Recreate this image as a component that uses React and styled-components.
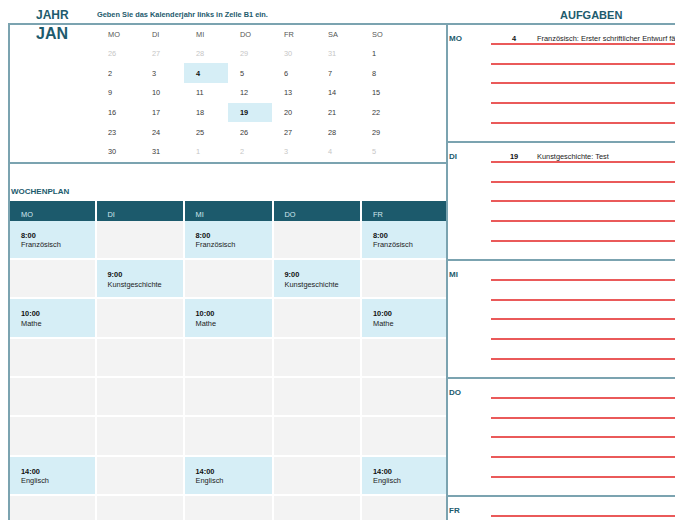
import React from 'react';
import styled, { createGlobalStyle } from 'styled-components';

const TEAL = '#1d5b6d';
const LINE = '#7ba3b0';
const RED = '#ea5a5a';
const LIGHT = '#d6eef6';
const EMPTY = '#f3f3f3';

const Global = createGlobalStyle`
  html, body { margin: 0; padding: 0; background: #ffffff; }
  body { font-family: "Liberation Sans", Arial, sans-serif; }
`;

const Page = styled.div`
  width: 675px;
  height: 520px;
  overflow: hidden;
  display: grid;
  grid-template-columns: 448px 227px;
  grid-template-rows: 23px 497px;
`;

const TitleLeft = styled.div`
  display: flex;
  align-items: flex-end;
  padding-left: 36px;
`;

const Jahr = styled.div`
  width: 61px;
  font-size: 12px;
  font-weight: 700;
  color: ${TEAL};
  padding-bottom: 1.5px;
`;

const Hint = styled.div`
  font-size: 7.4px;
  font-weight: 700;
  color: ${TEAL};
  padding-bottom: 4px;
  white-space: nowrap;
`;

const TitleRight = styled.div`
  display: flex;
  align-items: flex-end;
  padding-left: 112px;
  font-size: 11px;
  font-weight: 700;
  color: ${TEAL};
  padding-bottom: 1.7px;
  box-sizing: border-box;
`;

const Frame = styled.div`
  margin-left: 8px;
  border: 2px solid ${LINE};
  border-bottom: none;
  display: flex;
  flex-direction: column;
  overflow: hidden;
  min-height: 0;
`;

const Calendar = styled.div`
  display: grid;
  grid-template-columns: 86px repeat(7, 44px);
  grid-template-rows: 18.67px repeat(6, 19.67px);
  border-bottom: 2px solid ${LINE};
  flex-shrink: 0;
`;

const MonthCell = styled.div`
  grid-column: 1;
  grid-row: 1 / span 7;
  padding-left: 26px;
`;

const Month = styled.div`
  height: 18.67px;
  display: flex;
  align-items: center;
  font-size: 16px;
  font-weight: 700;
  color: ${TEAL};
`;

const DayHead = styled.div`
  display: flex;
  align-items: center;
  padding-left: 12px;
  font-size: 7.4px;
  color: #555555;
`;

const DateCell = styled.div`
  display: flex;
  align-items: center;
  padding-left: 12px;
  font-size: 7.4px;
  background: ${(p) => (p.$hl ? LIGHT : 'transparent')};
  font-weight: ${(p) => (p.$hl ? 700 : 400)};
  color: ${(p) => (p.$muted ? '#c6c6c6' : p.$hl ? '#111111' : '#3a3a3a')};
`;

const WeekTitle = styled.div`
  height: 37.33px;
  flex-shrink: 0;
  box-sizing: border-box;
  display: flex;
  align-items: flex-end;
  padding: 0 0 5.3px 1px;
  font-size: 8px;
  font-weight: 700;
  color: ${TEAL};
`;

const WeekGrid = styled.div`
  display: grid;
  grid-template-columns: 84.5px 86px 87px 86.5px 1fr;
  column-gap: 2px;
  flex-shrink: 0;
`;

const WeekHeader = styled(WeekGrid)`
  height: 19.67px;
`;

const HeadCell = styled.div`
  background: #1c5a6c;
  color: #d2e8ef;
  font-size: 7.4px;
  display: flex;
  align-items: flex-end;
  padding: 0 0 1.1px 11px;
`;

const WeekBody = styled(WeekGrid)`
  grid-auto-rows: 37.33px;
  row-gap: 2px;
`;

const WeekCell = styled.div`
  background: ${(p) => (p.$filled ? LIGHT : EMPTY)};
  display: flex;
  flex-direction: column;
  justify-content: center;
  padding: 2px 0 0 11px;
  box-sizing: border-box;
  font-size: 7.4px;
  line-height: 9.5px;
  color: #222222;
`;

const Time = styled.div`
  font-weight: 700;
  color: #111111;
`;

const RightCol = styled.div`
  display: flex;
  flex-direction: column;
  overflow: hidden;
  min-height: 0;
`;

const Section = styled.div`
  height: 118px;
  flex-shrink: 0;
  box-sizing: border-box;
  border-top: 2px solid ${LINE};
  display: grid;
  grid-template-columns: 43px 46px minmax(0, 1fr);
  grid-template-rows: 20px repeat(5, 19.67px) 1fr;
`;

const DayLabel = styled.div`
  grid-column: 1;
  grid-row: 1;
  display: flex;
  align-items: flex-end;
  padding: 0 0 2.3px 1px;
  font-size: 8px;
  font-weight: 700;
  color: ${TEAL};
`;

const LineCell = styled.div`
  grid-row: ${(p) => p.$row};
  border-bottom: 2px solid ${RED};
  display: flex;
  align-items: flex-end;
  padding-bottom: 0.4px;
  font-size: 7.4px;
  white-space: nowrap;
`;

const NumCell = styled(LineCell)`
  grid-column: 2;
  justify-content: center;
  font-weight: 700;
  color: #111111;
`;

const TextCell = styled(LineCell)`
  grid-column: 3;
  color: #222222;
  overflow: visible;
`;

const heads = ['MO', 'DI', 'MI', 'DO', 'FR', 'SA', 'SO'];

const calRows = [
  [26, 27, 28, 29, 30, 31, 1],
  [2, 3, 4, 5, 6, 7, 8],
  [9, 10, 11, 12, 13, 14, 15],
  [16, 17, 18, 19, 20, 21, 22],
  [23, 24, 25, 26, 27, 28, 29],
  [30, 31, 1, 2, 3, 4, 5],
];

const isMuted = (r, c) => (r === 0 && c < 6) || (r === 5 && c > 1);
const isHighlight = (r, c) => (r === 1 && c === 2) || (r === 3 && c === 3);

const weekDays = ['MO', 'DI', 'MI', 'DO', 'FR'];

const F = (time, subject) => ({ time, subject });
const weekRows = [
  [F('8:00', 'Französisch'), null, F('8:00', 'Französisch'), null, F('8:00', 'Französisch')],
  [null, F('9:00', 'Kunstgeschichte'), null, F('9:00', 'Kunstgeschichte'), null],
  [F('10:00', 'Mathe'), null, F('10:00', 'Mathe'), null, F('10:00', 'Mathe')],
  [null, null, null, null, null],
  [null, null, null, null, null],
  [null, null, null, null, null],
  [F('14:00', 'Englisch'), null, F('14:00', 'Englisch'), null, F('14:00', 'Englisch')],
  [null, null, null, null, null],
];

const tasks = [
  { day: 'MO', items: [{ num: '4', text: 'Französisch: Erster schriftlicher Entwurf fällig' }] },
  { day: 'DI', items: [{ num: '19', text: 'Kunstgeschichte: Test' }] },
  { day: 'MI', items: [] },
  { day: 'DO', items: [] },
  { day: 'FR', items: [] },
];

export default function App() {
  return (
    <>
      <Global />
      <Page>
        <TitleLeft>
          <Jahr>JAHR</Jahr>
          <Hint>Geben Sie das Kalenderjahr links in Zelle B1 ein.</Hint>
        </TitleLeft>
        <TitleRight>AUFGABEN</TitleRight>

        <Frame>
          <Calendar>
            <MonthCell>
              <Month>JAN</Month>
            </MonthCell>
            {heads.map((h) => (
              <DayHead key={h}>{h}</DayHead>
            ))}
            {calRows.map((row, r) =>
              row.map((d, c) => (
                <DateCell key={`${r}-${c}`} $muted={isMuted(r, c)} $hl={isHighlight(r, c)}>
                  {d}
                </DateCell>
              ))
            )}
          </Calendar>

          <WeekTitle>WOCHENPLAN</WeekTitle>
          <WeekHeader>
            {weekDays.map((d) => (
              <HeadCell key={d}>{d}</HeadCell>
            ))}
          </WeekHeader>
          <WeekBody>
            {weekRows.map((row, r) =>
              row.map((cell, c) => (
                <WeekCell key={`${r}-${c}`} $filled={!!cell}>
                  {cell && (
                    <>
                      <Time>{cell.time}</Time>
                      <div>{cell.subject}</div>
                    </>
                  )}
                </WeekCell>
              ))
            )}
          </WeekBody>
        </Frame>

        <RightCol>
          {tasks.map((s) => (
            <Section key={s.day}>
              <DayLabel>{s.day}</DayLabel>
              {[0, 1, 2, 3, 4].map((i) => {
                const it = s.items[i];
                return (
                  <React.Fragment key={i}>
                    <NumCell $row={i + 1}>{it ? it.num : ''}</NumCell>
                    <TextCell $row={i + 1}>{it ? it.text : ''}</TextCell>
                  </React.Fragment>
                );
              })}
            </Section>
          ))}
        </RightCol>
      </Page>
    </>
  );
}
